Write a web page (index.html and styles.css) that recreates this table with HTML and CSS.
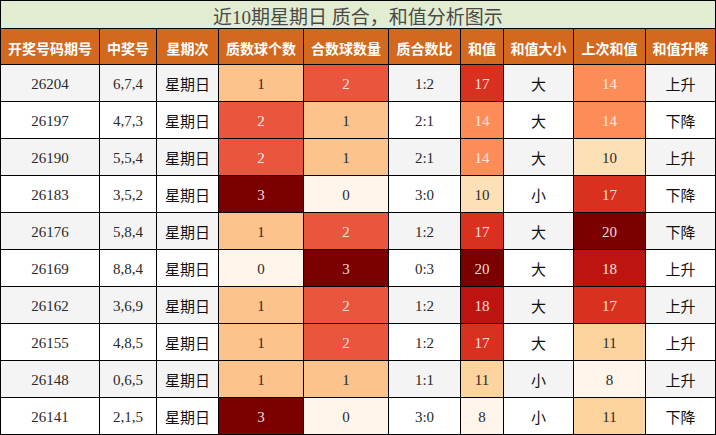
FILE: index.html
```html
<!DOCTYPE html>
<html lang="zh">
<head>
<meta charset="utf-8">
<title>近10期星期日 质合，和值分析图示</title>
<link rel="stylesheet" href="styles.css">
</head>
<body>
<div class="board">
  <div class="title">近10期星期日 质合，和值分析图示</div>
  <div class="th">开奖号码期号</div><div class="th">中奖号</div><div class="th">星期次</div><div class="th">质数球个数</div><div class="th">合数球数量</div><div class="th">质合数比</div><div class="th">和值</div><div class="th">和值大小</div><div class="th">上次和值</div><div class="th">和值升降</div>

  <div class="td g">26204</div><div class="td g">6,7,4</div><div class="td g cn">星期日</div><div class="td q1">1</div><div class="td q2">2</div><div class="td g">1:2</div><div class="td s17">17</div><div class="td g cn">大</div><div class="td s14">14</div><div class="td g cn">上升</div>

  <div class="td">26197</div><div class="td">4,7,3</div><div class="td cn">星期日</div><div class="td q2">2</div><div class="td q1">1</div><div class="td">2:1</div><div class="td s14">14</div><div class="td cn">大</div><div class="td s14">14</div><div class="td cn">下降</div>

  <div class="td g">26190</div><div class="td g">5,5,4</div><div class="td g cn">星期日</div><div class="td q2">2</div><div class="td q1">1</div><div class="td g">2:1</div><div class="td s14">14</div><div class="td g cn">大</div><div class="td s10">10</div><div class="td g cn">上升</div>

  <div class="td">26183</div><div class="td">3,5,2</div><div class="td cn">星期日</div><div class="td q3">3</div><div class="td q0">0</div><div class="td">3:0</div><div class="td s10">10</div><div class="td cn">小</div><div class="td s17">17</div><div class="td cn">下降</div>

  <div class="td g">26176</div><div class="td g">5,8,4</div><div class="td g cn">星期日</div><div class="td q1">1</div><div class="td q2">2</div><div class="td g">1:2</div><div class="td s17">17</div><div class="td g cn">大</div><div class="td s20">20</div><div class="td g cn">下降</div>

  <div class="td">26169</div><div class="td">8,8,4</div><div class="td cn">星期日</div><div class="td q0">0</div><div class="td q3">3</div><div class="td">0:3</div><div class="td s20">20</div><div class="td cn">大</div><div class="td s18">18</div><div class="td cn">上升</div>

  <div class="td g">26162</div><div class="td g">3,6,9</div><div class="td g cn">星期日</div><div class="td q1">1</div><div class="td q2">2</div><div class="td g">1:2</div><div class="td s18">18</div><div class="td g cn">大</div><div class="td s17">17</div><div class="td g cn">上升</div>

  <div class="td">26155</div><div class="td">4,8,5</div><div class="td cn">星期日</div><div class="td q1">1</div><div class="td q2">2</div><div class="td">1:2</div><div class="td s17">17</div><div class="td cn">大</div><div class="td s11">11</div><div class="td cn">上升</div>

  <div class="td g">26148</div><div class="td g">0,6,5</div><div class="td g cn">星期日</div><div class="td q1">1</div><div class="td q1">1</div><div class="td g">1:1</div><div class="td s11">11</div><div class="td g cn">小</div><div class="td s8">8</div><div class="td g cn">上升</div>

  <div class="td">26141</div><div class="td">2,1,5</div><div class="td cn">星期日</div><div class="td q3">3</div><div class="td q0">0</div><div class="td">3:0</div><div class="td s8">8</div><div class="td cn">小</div><div class="td s11">11</div><div class="td cn">下降</div>
</div>
</body>
</html>
```

FILE: styles.css
```css
html, body {
  margin: 0;
  padding: 0;
  background: #ffffff;
}

.board {
  width: 716px;
  box-sizing: border-box;
  display: grid;
  grid-template-columns: 98px 56px 61px 84px 84px 71px 42px 69px 71px 69px;
  grid-template-rows: 27px 35px repeat(10, 36px);
  gap: 1px;
  padding: 1px;
  background: #000000;
  font-family: "Liberation Serif", "Noto Sans CJK SC", serif;
}

.title {
  grid-column: 1 / -1;
  background: #e2ecd0;
  color: #4a4a4a;
  font-family: "Liberation Serif", "Noto Sans CJK SC", serif;
  font-size: 19px;
  display: flex;
  align-items: center;
  justify-content: center;
  padding-top: 2px;
}

.th {
  background: #d2691e;
  color: #ffffff;
  font-family: "Noto Sans CJK SC", sans-serif;
  font-weight: bold;
  font-size: 14px;
  display: flex;
  align-items: center;
  justify-content: center;
  padding-top: 3px;
  white-space: nowrap;
}

.td {
  background: #ffffff;
  color: #2a2a2a;
  font-size: 15px;
  display: flex;
  align-items: center;
  justify-content: center;
  padding-top: 2px;
  white-space: nowrap;
}

.td.g { background: #f4f4f4; }

.td.cn {
  font-family: "Noto Sans CJK SC", sans-serif;
  color: #111111;
  padding-top: 0;
}

/* prime / composite counts */
.td.q0 { background: #fff5eb; }
.td.q1 { background: #fdc38d; }
.td.q2 { background: #e9553d; color: #fbe7e2; }
.td.q3 { background: #7b0000; color: #f1dcdc; }

/* sum values */
.td.s8  { background: #fff5eb; }
.td.s10 { background: #fee0b6; }
.td.s11 { background: #fdd49e; }
.td.s14 { background: #fc8d59; color: #fde8de; }
.td.s17 { background: #d93020; color: #fbe3df; }
.td.s18 { background: #be1411; color: #f9e0df; }
.td.s20 { background: #7b0000; color: #f1dcdc; }
```
